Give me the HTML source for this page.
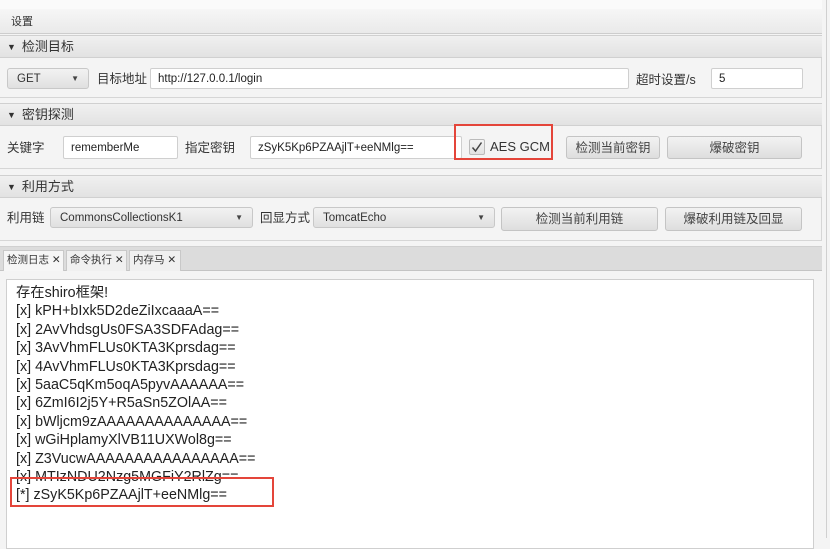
<!DOCTYPE html>
<html><head><meta charset="utf-8"><style>
*{box-sizing:border-box;margin:0;padding:0}
body{width:830px;height:538px;overflow:hidden;background:#f4f4f4;font-family:"Liberation Sans","Noto Sans CJK SC",sans-serif;font-size:12px;color:#333;position:relative}
.a{position:absolute}
.hdr{position:absolute;left:0;width:822px;height:23px;background:linear-gradient(#f0f0f0,#e2e2e2);border-top:1px solid #d0d0d0;border-bottom:1px solid #d0d0d0;font-size:13px;color:#333;padding-left:7px;line-height:21px}
.hdr:before{content:"▼";font-size:9px;margin-right:6px;position:relative;top:-1px}
.row{position:absolute;left:0;width:822px;background:#f4f4f4;border-right:1px solid #d6d6d6;border-bottom:1px solid #d6d6d6}
.inp{position:absolute;background:#fff;border:1px solid #cfcfcf;border-radius:2px;height:21px;line-height:21px;padding-left:7px;font-size:11.5px;color:#222}
.btn{position:absolute;background:linear-gradient(#f2f2f2,#dedede);border:1px solid #c4c4c4;border-radius:3px;height:23px;line-height:22px;text-align:center;font-size:12.5px;color:#444}
.cmb{position:absolute;background:linear-gradient(#f2f2f2,#e0e0e0);border:1px solid #c8c8c8;border-radius:3px;height:21px;line-height:20px;padding-left:9px;font-size:11.5px;color:#333}
.cmb:after{content:"▼";position:absolute;right:9px;top:0;font-size:8px;color:#444}
.lbl{position:absolute;font-size:12.5px;color:#333;line-height:16px;white-space:nowrap}
.tab{position:absolute;top:250px;height:21px;background:#f0f0f0;border:1px solid #c8c8c8;border-bottom:none;font-size:10.5px;line-height:19px;padding-left:3px;color:#333;white-space:nowrap;overflow:hidden}
.log{position:absolute;left:6px;top:279px;width:808px;height:270px;background:#fff;border:1px solid #cfcfcf;padding:4px 0 0 9px;font-size:14.3px;line-height:18.4px;color:#222}
</style></head><body>
<div class="a" style="left:0;top:0;width:822px;height:9px;background:#fafafa"></div>
<div class="a" style="left:0;top:9px;width:822px;height:25px;background:linear-gradient(#f6f6f6,#eaeaea);border-bottom:1px solid #cdcdcd"></div>
<div class="a" style="left:11px;top:13px;font-size:11px;color:#333">设置</div>

<div class="hdr" style="top:35px">检测目标</div>
<div class="row" style="top:58px;height:40px"></div>
<div class="cmb" style="left:7px;top:68px;width:82px">GET</div>
<div class="lbl" style="left:97px;top:71px">目标地址</div>
<div class="inp" style="left:150px;top:68px;width:479px">http://127.0.0.1/login</div>
<div class="lbl" style="left:636px;top:72px">超时设置/s</div>
<div class="inp" style="left:711px;top:68px;width:92px">5</div>

<div class="hdr" style="top:103px">密钥探测</div>
<div class="row" style="top:126px;height:43px"></div>
<div class="lbl" style="left:7px;top:140px">关键字</div>
<div class="inp" style="left:63px;top:136px;width:115px;height:23px;line-height:23px">rememberMe</div>
<div class="lbl" style="left:185px;top:140px">指定密钥</div>
<div class="inp" style="left:250px;top:136px;width:212px;height:23px;line-height:23px">zSyK5Kp6PZAAjlT+eeNMlg==</div>
<div class="a" style="left:469px;top:139px;width:16px;height:16px;border:1px solid #bbb;border-radius:2px;background:linear-gradient(#f4f4f4,#e2e2e2)"><svg width="14" height="14" viewBox="0 0 14 14" style="position:absolute;left:0;top:0"><path d="M2.5 7.5 L5.5 11 L11.5 2.5" stroke="#444" stroke-width="1.5" fill="none"/></svg></div>
<div class="lbl" style="left:490px;top:139px;font-size:13px;color:#333">AES GCM</div>
<div class="a" style="left:454px;top:124px;width:99px;height:36px;border:2px solid #e4453a"></div>
<div class="btn" style="left:566px;top:136px;width:94px">检测当前密钥</div>
<div class="btn" style="left:667px;top:136px;width:135px">爆破密钥</div>

<div class="hdr" style="top:175px">利用方式</div>
<div class="row" style="top:198px;height:43px"></div>
<div class="lbl" style="left:7px;top:210px">利用链</div>
<div class="cmb" style="left:50px;top:207px;width:203px">CommonsCollectionsK1</div>
<div class="lbl" style="left:260px;top:210px">回显方式</div>
<div class="cmb" style="left:313px;top:207px;width:182px">TomcatEcho</div>
<div class="btn" style="left:501px;top:207px;width:157px;height:24px">检测当前利用链</div>
<div class="btn" style="left:665px;top:207px;width:137px;height:24px">爆破利用链及回显</div>

<div class="a" style="left:0;top:246px;width:822px;height:25px;background:#dcdcdc;border-top:1px solid #d0d0d0;border-bottom:1px solid #c4c4c4"></div>
<div class="tab" style="left:3px;width:61px;background:#f6f6f6;height:22px">检测日志 ✕</div>
<div class="tab" style="left:66px;width:61px">命令执行 ✕</div>
<div class="tab" style="left:129px;width:52px">内存马 ✕</div>
<div class="a" style="left:0;top:271px;width:822px;height:267px;background:#f4f4f4"></div>
<div class="a" style="left:826px;top:0;width:1px;height:538px;background:#d0d0d0"></div>
<div class="log">存在shiro框架!<br>[x] kPH+bIxk5D2deZiIxcaaaA==<br>[x] 2AvVhdsgUs0FSA3SDFAdag==<br>[x] 3AvVhmFLUs0KTA3Kprsdag==<br>[x] 4AvVhmFLUs0KTA3Kprsdag==<br>[x] 5aaC5qKm5oqA5pyvAAAAAA==<br>[x] 6ZmI6I2j5Y+R5aSn5ZOlAA==<br>[x] bWljcm9zAAAAAAAAAAAAAA==<br>[x] wGiHplamyXlVB11UXWol8g==<br>[x] Z3VucwAAAAAAAAAAAAAAAA==<br>[x] MTIzNDU2Nzg5MGFiY2RlZg==<br>[*] zSyK5Kp6PZAAjlT+eeNMlg==</div>
<div class="a" style="left:10px;top:477px;width:264px;height:30px;border:2px solid #e4453a"></div>
</body></html>
